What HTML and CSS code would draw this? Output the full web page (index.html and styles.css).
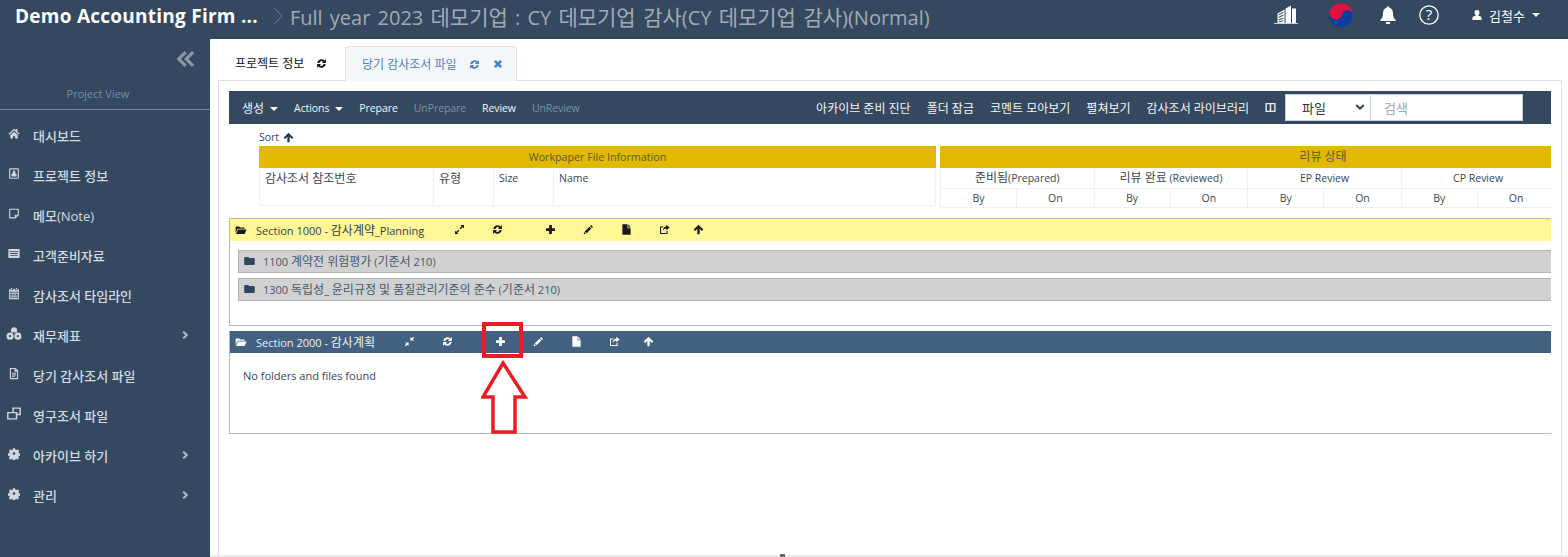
FILE: index.html
```html
<!DOCTYPE html>
<html lang="ko">
<head>
<meta charset="utf-8">
<title>감사조서 파일</title>
<link rel="stylesheet" href="styles.css">
</head>
<body>
<svg class="defs" aria-hidden="true">
  <symbol id="i-refresh" viewBox="0 0 16 16"><path d="M1.800 7.200A6.200 6.200 0 0 1 12.300 3.500L14.400 1.500V7.400H8.500l2-2A3.200 3.200 0 0 0 5 7.200zM14.200 8.800A6.200 6.200 0 0 1 3.700 12.500L1.600 14.500V8.600H7.500l-2 2A3.200 3.200 0 0 0 11 8.800z"/></symbol>
  <symbol id="i-close" viewBox="0 0 16 16"><path d="M4.500 1.500 8 5 11.500 1.500 14.500 4.500 11 8 14.500 11.500 11.500 14.500 8 11 4.500 14.500 1.500 11.500 5 8 1.500 4.500z"/></symbol>
  <symbol id="i-home" viewBox="0 0 16 16"><path d="M8 1.500 .5 8.300l1.100 1.200L8 3.900l6.400 5.600 1.100-1.200-3-2.700V2h-2.300v1.700zM3 10 8 5.600l5 4.400v4.800H9.400v-3.300H6.600v3.300H3z"/></symbol>
  <symbol id="i-contact" viewBox="0 0 16 16"><path fill-rule="evenodd" d="M3 1h10a1.500 1.500 0 0 1 1.500 1.500v11A1.500 1.500 0 0 1 13 15H3a1.500 1.500 0 0 1-1.500-1.500v-11A1.500 1.500 0 0 1 3 1zm0 1.500v11h10v-11zM8 4a2 2 0 0 1 2 2c0 .8-.4 1.400-.8 1.800 1.500.3 2.300 1 2.300 2.200v2h-7v-2c0-1.200.8-1.900 2.300-2.200C6.400 7.400 6 6.800 6 6a2 2 0 0 1 2-2z"/></symbol>
  <symbol id="i-note" viewBox="0 0 16 16"><path fill-rule="evenodd" d="M2.500 1.500h11A1 1 0 0 1 14.500 2.500v7.700L10 14.500H2.500a1 1 0 0 1-1-1v-11a1 1 0 0 1 1-1zM3 3v10h6V9.500h4V3zm7.500 8v1.200l1.300-1.200z"/></symbol>
  <symbol id="i-card" viewBox="0 0 16 16"><path fill-rule="evenodd" d="M.5 2h15v12H.5zM2 4.500v1.300h12V4.500zm1 2.900v1.100h10V7.400zm0 2.600v1.100h10V10z"/></symbol>
  <symbol id="i-calendar" viewBox="0 0 16 16"><path fill-rule="evenodd" d="M4 .5h1.700v2H4zM10.300.5H12v2h-1.700zM1.500 2h1.800v1.500h3.400V2h2.600v1.500h3.400V2h1.800v13.500h-13zM3 5.500v2.300h2V5.500zm3 0v2.300h1.500V5.500zm2.500 0v2.300H10V5.500zM11 5.500v2.300h2V5.500zM3 8.800V11h2V8.800zm3 0V11h1.500V8.800zm2.500 0V11H10V8.800zM11 8.800V11h2V8.800zM3 12v2h2v-2zm3 0v2h1.500v-2zm2.500 0v2H10v-2zM11 12v2h2v-2z"/></symbol>
  <symbol id="i-tree" viewBox="0 0 18 14"><path d="M9 0a3.600 3.600 0 0 1 3.600 3.600c0 .9-.3 1.700-.9 2.400H6.300A3.600 3.600 0 0 1 9 0zM4.600 6a4 4 0 1 1 0 8 4 4 0 0 1 0-8zm8.800 0a4 4 0 1 1 0 8 4 4 0 0 1 0-8zM4.600 8.800a1.200 1.200 0 1 0 0 2.400 1.200 1.200 0 0 0 0-2.400zm8.800 0a1.200 1.200 0 1 0 0 2.400 1.200 1.200 0 0 0 0-2.400z"/></symbol>
  <symbol id="i-doc" viewBox="0 0 16 16"><path fill-rule="evenodd" d="M2.500.5H10l3.500 3.500v11.500h-11zM4 2v12h8V5.500H8.800V2zM5.300 7h5.500v1.200H5.300zm0 2.300h5.500v1.200H5.300zm0 2.300h4v1.200h-4z"/></symbol>
  <symbol id="i-dup" viewBox="0 0 18 16"><path fill-rule="evenodd" d="M7 .5h10.500v9.500H13v5.500H.5V6H7zm1.800 1.800V6H13v2.200h2.700V2.300zM2.300 7.800v5.900h8.900V7.800z"/></symbol>
  <symbol id="i-cog" viewBox="0 0 16 16"><path fill-rule="evenodd" d="M6.500 1h3l.4 2 1.200.5 1.700-1.100 2.100 2.100-1.100 1.700.5 1.200 2 .4v3l-2 .4-.5 1.200 1.100 1.700-2.100 2.100-1.700-1.100-1.200.5-.4 2h-3l-.4-2-1.200-.5-1.700 1.100-2.100-2.100 1.100-1.700-.5-1.200-2-.4v-3l2-.4.5-1.200L1.200 4.500l2.100-2.100L5 3.500l1.200-.5zM8 6.200a1.800 1.800 0 1 0 0 3.600 1.800 1.800 0 0 0 0-3.600z"/></symbol>
  <symbol id="i-chev" viewBox="0 0 8 10"><path d="M2.200 .5 7 5 2.200 9.500.6 8 3.900 5 .6 2z"/></symbol>
  <symbol id="i-double" viewBox="0 0 20 18"><path d="M9.500 1 11.800 3.300 6 9l5.800 5.700-2.300 2.300L1.500 9zM17 1l2.300 2.300L13.500 9l5.800 5.700L17 17 9 9z"/></symbol>
  <symbol id="i-up" viewBox="0 0 16 16"><path d="M8 1 15 8 13 10 9.700 6.800V15H6.300V6.800L3 10 1 8z"/></symbol>
  <symbol id="i-open" viewBox="0 0 16 14"><path d="M.5 2h5l1.200 1.400H13v1.800H3.500L.5 11zM4 6.200h11.800L13 12.500H.8z"/></symbol>
  <symbol id="i-folder" viewBox="0 0 14 12"><path d="M1.500 1h4l1 1.300H12.500A1.200 1.200 0 0 1 13.700 3.500v6.300a1.200 1.200 0 0 1-1.200 1.200h-11A1.200 1.200 0 0 1 .3 9.800v-7.600A1.200 1.200 0 0 1 1.500 1z"/></symbol>
  <symbol id="i-expand" viewBox="0 0 16 16"><path d="M9.500 1.500H14.500V6.500L12.700 4.700 9.700 7.700 8.300 6.300 11.300 3.300zM6.500 14.500H1.500V9.500L3.300 11.300 6.300 8.300 7.700 9.700 4.700 12.700z"/></symbol>
  <symbol id="i-shrink" viewBox="0 0 16 16"><path d="M14.500 6.700H9.300V1.500L11.200 3.400 13.400 1.200 14.800 2.600 12.600 4.800zM1.500 9.300H6.700V14.500L4.800 12.600 2.600 14.800 1.200 13.400 3.400 11.200z"/></symbol>
  <symbol id="i-plus" viewBox="0 0 16 16"><path d="M6 1.500h4V6h4.500v4H10v4.500H6V10H1.500V6H6z"/></symbol>
  <symbol id="i-pencil" viewBox="0 0 16 16"><path d="M11.700 1.500 14.500 4.300 13 5.800 10.200 3zM9.300 3.900 12.100 6.700 5.200 13.600 2.400 10.800zM1.800 11.700 4.300 14.200 1 15z"/></symbol>
  <symbol id="i-file" viewBox="0 0 16 16"><path d="M2 .5H9.500V6H14V15.500H2zM10.500 .5 14 5H10.500z"/></symbol>
  <symbol id="i-share" viewBox="0 0 16 16"><path fill-rule="evenodd" d="M10.500 1 15.500 5 10.500 9V6.800C8 6.800 6.500 7.700 5.500 10 5.500 6.500 7.500 3.700 10.500 3.500zM1.500 3.500H7L5.500 5H3v8h8v-2.500l1.500-1.200V14.500h-11z"/></symbol>
  <symbol id="i-bell" viewBox="0 0 16 16"><path d="M8 .5c.7 0 1.200.5 1.200 1.100 2 .5 3.200 2.200 3.200 4.400 0 3.800.9 5 2.300 6.300v1H1.300v-1c1.400-1.300 2.300-2.500 2.300-6.300 0-2.200 1.200-3.900 3.200-4.400C6.800 1 7.300.5 8 .5zM6 14.300h4a2 2 0 0 1-4 0z"/></symbol>
  <symbol id="i-user" viewBox="0 0 12 14"><path d="M6 1a2.900 2.900 0 0 1 2.900 3.200c0 1.200-.6 2.300-1.300 2.900v.9c2 .4 3.900 1 3.900 2.400V13H.5v-2.600c0-1.400 1.900-2 3.900-2.400v-.9C3.700 6.500 3.100 5.400 3.100 4.200A2.900 2.900 0 0 1 6 1z"/></symbol>
  <symbol id="i-columns" viewBox="0 0 12 12"><path fill-rule="evenodd" d="M.5 1h11v10H.5zM2 2.500v7h3.200v-7zm4.800 0v7H10v-7z"/></symbol>
  <symbol id="i-building" viewBox="0 0 24 20"><path fill-rule="evenodd" d="M0 18h24v.8H0zM3.500 8.500 10.500 4.500V18H3.500zM4.700 9.300v1.200l4.600-2.700V6.700zM4.700 11.800v1.200l4.600-2.300V9.500zM4.700 14.300v1.200l4.600-1.900V12.400zM4.700 16.500v1l4.600-1.200V15.200z"/><path d="M11.500 3.500 17 .5V18H11.500zM18 3.500h4V18H18z"/></symbol>
</svg>

<header class="topbar">
  <div class="brand">Demo Accounting Firm ...</div>
  <svg class="crumb-sep" viewBox="0 0 10 18"><path d="M1 1 9 9 1 17" fill="none" stroke="#6d7e92" stroke-width="1"/></svg>
  <div class="crumb">Full year 2023 <span class="ko">데모기업</span> : CY <span class="ko">데모기업 감사</span>(CY <span class="ko">데모기업 감사</span>)(Normal)</div>
  <div class="top-actions">
    <svg class="ic-building"><use href="#i-building"/></svg>
    <svg class="flag" viewBox="0 0 24 24">
      <circle cx="12" cy="12" r="12" fill="#0b3f9f"/>
      <path d="M.4 9A12 12 0 0 1 23.900 13.500 5.500 5.500 0 0 0 13 12 6.500 6.500 0 0 1 .4 9z" fill="#e0123e"/>
    </svg>
    <svg class="ic-bell"><use href="#i-bell"/></svg>
    <svg class="ic-help" viewBox="0 0 20 20"><circle cx="10" cy="10" r="9.200" fill="none" stroke="#fff" stroke-width="1.300"/><text x="10" y="15" text-anchor="middle" class="help-mark">?</text></svg>
    <div class="user">
      <svg class="ic-user"><use href="#i-user"/></svg>
      <span>김철수</span>
      <i class="caret"></i>
    </div>
  </div>
</header>

<div class="shell">
  <aside class="sidebar">
    <div class="collapse-row"><svg class="ic-double"><use href="#i-double"/></svg></div>
    <div class="view-label">Project View</div>
    <nav class="nav">
      <a class="nav-item"><svg class="nav-ic"><use href="#i-home"/></svg><span>대시보드</span></a>
      <a class="nav-item"><svg class="nav-ic"><use href="#i-contact"/></svg><span>프로젝트 정보</span></a>
      <a class="nav-item"><svg class="nav-ic"><use href="#i-note"/></svg><span>메모(Note)</span></a>
      <a class="nav-item"><svg class="nav-ic"><use href="#i-card"/></svg><span>고객준비자료</span></a>
      <a class="nav-item"><svg class="nav-ic"><use href="#i-calendar"/></svg><span>감사조서 타임라인</span></a>
      <a class="nav-item"><svg class="nav-ic nav-ic-wide"><use href="#i-tree"/></svg><span>재무제표</span><svg class="nav-chev"><use href="#i-chev"/></svg></a>
      <a class="nav-item"><svg class="nav-ic"><use href="#i-doc"/></svg><span>당기 감사조서 파일</span></a>
      <a class="nav-item"><svg class="nav-ic nav-ic-wide"><use href="#i-dup"/></svg><span>영구조서 파일</span></a>
      <a class="nav-item"><svg class="nav-ic"><use href="#i-cog"/></svg><span>아카이브 하기</span><svg class="nav-chev"><use href="#i-chev"/></svg></a>
      <a class="nav-item"><svg class="nav-ic"><use href="#i-cog"/></svg><span>관리</span><svg class="nav-chev"><use href="#i-chev"/></svg></a>
    </nav>
  </aside>

  <main class="main">
    <div class="tabs">
      <div class="tab"><span>프로젝트 정보</span><svg class="tab-ic"><use href="#i-refresh"/></svg></div>
      <div class="tab tab-active"><span>당기 감사조서 파일</span><svg class="tab-ic"><use href="#i-refresh"/></svg><svg class="tab-ic tab-x"><use href="#i-close"/></svg></div>
    </div>
    <div class="panel">
      <div class="toolbar">
        <div class="tb-left">
          <span class="tb-item tb-ko">생성<i class="caret small"></i></span>
          <span class="tb-item">Actions<i class="caret small"></i></span>
          <span class="tb-item">Prepare</span>
          <span class="tb-item muted">UnPrepare</span>
          <span class="tb-item">Review</span>
          <span class="tb-item muted">UnReview</span>
        </div>
        <div class="tb-right">
          <span class="tb-item tb-ko">아카이브 준비 진단</span>
          <span class="tb-item tb-ko">폴더 잠금</span>
          <span class="tb-item tb-ko">코멘트 모아보기</span>
          <span class="tb-item tb-ko">펼쳐보기</span>
          <span class="tb-item tb-ko">감사조서 라이브러리</span>
          <svg class="ic-columns"><use href="#i-columns"/></svg>
          <div class="search">
            <div class="search-type"><span>파일</span><svg class="search-chev" viewBox="0 0 12 8"><path d="M1.500 1 6 5.500 10.500 1" fill="none" stroke="#2c3e50" stroke-width="2.200"/></svg></div>
            <div class="search-input">검색</div>
          </div>
        </div>
      </div>

      <div class="sort">Sort <svg class="ic-sort"><use href="#i-up"/></svg></div>

      <div class="wp-table">
        <div class="info-table">
          <div class="band">Workpaper File Information</div>
          <div class="info-cols">
            <div class="info-col c-ref"><span class="ko">감사조서 참조번호</span></div>
            <div class="info-col c-type"><span class="ko">유형</span></div>
            <div class="info-col c-size">Size</div>
            <div class="info-col c-name">Name</div>
          </div>
        </div>
        <div class="review-table">
          <div class="band band-review"><span class="ko">리뷰 상태</span></div>
          <div class="review-cols">
            <div class="review-group"><div class="rg-title"><span class="ko">준비됨</span>(Prepared)</div><div class="rg-sub"><span>By</span><span>On</span></div></div>
            <div class="review-group"><div class="rg-title"><span class="ko">리뷰 완료</span> (Reviewed)</div><div class="rg-sub"><span>By</span><span>On</span></div></div>
            <div class="review-group"><div class="rg-title">EP Review</div><div class="rg-sub"><span>By</span><span>On</span></div></div>
            <div class="review-group"><div class="rg-title">CP Review</div><div class="rg-sub"><span>By</span><span>On</span></div></div>
          </div>
        </div>
      </div>

      <section class="section sec-one">
        <div class="sec-head head-yellow">
          <svg class="sec-folder"><use href="#i-open"/></svg>
          <span class="sec-title">Section 1000 - <span class="ko">감사계약</span>_Planning</span>
          <div class="sec-tools">
            <svg class="tool"><use href="#i-expand"/></svg>
            <svg class="tool"><use href="#i-refresh"/></svg>
            <svg class="tool far"><use href="#i-plus"/></svg>
            <svg class="tool"><use href="#i-pencil"/></svg>
            <svg class="tool"><use href="#i-file"/></svg>
            <svg class="tool"><use href="#i-share"/></svg>
            <svg class="tool near"><use href="#i-up"/></svg>
          </div>
        </div>
        <div class="sec-body">
          <div class="folder-row"><svg class="row-folder"><use href="#i-folder"/></svg><span>1100 <span class="ko">계약전 위험평가</span> (<span class="ko">기준서</span> 210)</span></div>
          <div class="folder-row"><svg class="row-folder"><use href="#i-folder"/></svg><span>1300 <span class="ko">독립성</span>_ <span class="ko">윤리규정 및 품질관리기준의 준수</span> (<span class="ko">기준서</span> 210)</span></div>
        </div>
      </section>

      <section class="section sec-two">
        <div class="sec-head head-blue">
          <svg class="sec-folder"><use href="#i-open"/></svg>
          <span class="sec-title">Section 2000 - <span class="ko">감사계획</span></span>
          <div class="sec-tools">
            <svg class="tool"><use href="#i-shrink"/></svg>
            <svg class="tool"><use href="#i-refresh"/></svg>
            <svg class="tool far"><use href="#i-plus"/></svg>
            <svg class="tool"><use href="#i-pencil"/></svg>
            <svg class="tool"><use href="#i-file"/></svg>
            <svg class="tool"><use href="#i-share"/></svg>
            <svg class="tool near"><use href="#i-up"/></svg>
          </div>
        </div>
        <div class="empty">No folders and files found</div>
      </section>
    </div>
  </main>
</div>

<svg class="callout" viewBox="0 0 60 116">
  <rect x="3" y="2" width="37" height="32" fill="none" stroke="#ed1c24" stroke-width="4"/>
  <path d="M22 41 44 75H34V110H12V75H2z" fill="none" stroke="#ed1c24" stroke-width="3.500"/>
</svg>
<div class="scroll-track"><i class="scroll-grip"></i></div>
</body>
</html>
```

FILE: styles.css
```css
* { box-sizing: border-box; }
html, body { margin: 0; height: 557px; overflow: hidden; }
body {
  position: relative;
  background: #fff;
  color: #3a4654;
  font-family: "Open Sans", "Noto Sans CJK KR", sans-serif;
  font-size: 11px;
}
.defs { position: absolute; width: 0; height: 0; }
svg { display: block; flex: none; }
.ko { font-size: 12px; }

/* top bar */
.topbar {
  height: 39px;
  background: #34485f;
  display: flex;
  align-items: center;
  padding: 0 0 7px 15px;
}
.brand { color: #fff; font-size: 19px; font-weight: 700; letter-spacing: .25px; white-space: nowrap; }
.crumb-sep { width: 10px; height: 18px; margin-left: 15px; }
.crumb { color: #a3abb5; font-size: 20px; margin-left: 7px; white-space: nowrap; word-spacing: 2px; }
.crumb .ko { font-size: 21px; }
.top-actions { margin-left: auto; display: flex; align-items: center; height: 100%; padding-bottom: 2px; }
.ic-building { width: 24px; height: 20px; fill: #fff; margin-right: 31px; }
.flag { width: 24px; height: 24px; margin-right: 26px; }
.ic-bell { width: 18px; height: 18px; fill: #fff; margin-right: 22px; }
.ic-help { width: 20px; height: 20px; margin-right: 33px; }
.help-mark { fill: #fff; font-size: 15px; font-family: "Open Sans", sans-serif; }
.user { display: flex; align-items: center; color: #fff; font-size: 13px; margin-right: 28px; }
.ic-user { width: 10px; height: 12px; fill: #fff; margin-right: 7px; }
.caret {
  display: inline-block;
  width: 0;
  height: 0;
  margin-left: 7px;
  border-left: 4px solid transparent;
  border-right: 4px solid transparent;
  border-top: 4px solid #fff;
}
.caret.small { margin-left: 6px; vertical-align: middle; }

/* shell */
.shell { display: flex; height: 518px; }
.sidebar { width: 210px; flex: none; background: #34485f; }
.collapse-row { display: flex; justify-content: flex-end; padding: 11px 15px 0 0; height: 46px; }
.ic-double { width: 20px; height: 18px; fill: #8b97a6; }
.view-label {
  height: 25px;
  border-bottom: 1px solid #6f87a3;
  text-align: center;
  color: #6b92ba;
  font-size: 11px;
  line-height: 18px;
  padding-right: 14px;
}
.nav { padding-top: 5px; }
.nav-item {
  display: flex;
  align-items: center;
  height: 40px;
  color: #d5dbe2;
  font-size: 13px;
  font-weight: 500;
  padding-left: 8px;
}
.nav-ic { width: 12px; height: 13px; fill: #cfd6de; margin-right: 13px; margin-top: -4px; }
.nav-ic-wide { width: 16px; margin-left: -2px; margin-right: 11px; }
.nav-chev { width: 7px; height: 10px; fill: #b7c0ca; margin-left: auto; margin-right: 21px; }

/* main */
.main { flex: 1; min-width: 0; display: flex; flex-direction: column; padding: 7px 6px 0 8px; border-bottom: 2px solid #ececec; }
.tabs { display: flex; height: 34px; padding-left: 1px; }
.tab {
  display: flex;
  align-items: center;
  width: 126px;
  padding-left: 16px;
  color: #111;
  font-size: 12px;
}
.tab-active {
  width: 172px;
  padding-left: 16px;
  margin-bottom: -1px;
  height: 35px;
  position: relative;
  color: #4b7fc7;
  background: #f4f7fa;
  border: 1px solid #d8dfe7;
  border-bottom: 0;
  border-radius: 4px 4px 0 0;
}
.tab-ic { width: 11px; height: 11px; fill: #111; margin-left: 12px; }
.tab-active .tab-ic { fill: #4b7fc7; }
.tab-x { width: 10px; height: 10px; margin-left: 13px; }
.panel {
  flex: 1;
  border: 1px solid #d8dfe7;
  border-bottom: 0;
  padding: 10px 10px 0 10px;
}

/* toolbar */
.toolbar {
  height: 33px;
  background: #34485f;
  display: flex;
  align-items: center;
  justify-content: space-between;
  padding-left: 13px;
}
.tb-left, .tb-right { display: flex; align-items: center; }
.tb-left { gap: 16px; }
.tb-right { gap: 16px; padding-right: 28px; }
.tb-item { color: #f6f7f9; font-size: 10.500px; white-space: nowrap; letter-spacing: -.08px; font-weight: 500; }
.tb-ko { font-size: 12px; letter-spacing: 0; font-weight: 400; }
.tb-item.muted { color: #8090a2; }
.ic-columns { width: 11px; height: 11px; fill: #e8ecf0; }
.search { display: flex; height: 27px; margin-left: -7px; }
.search-type {
  width: 86px;
  background: #fff;
  border: 1px solid #c7d2de;
  display: flex;
  align-items: center;
  justify-content: space-between;
  padding: 0 5px 0 16px;
  color: #333;
  font-size: 13px;
}
.search-chev { width: 10px; height: 7px; }
.search-input {
  width: 152px;
  background: #fff;
  border: 1px solid #c7d2de;
  border-left: 0;
  display: flex;
  align-items: center;
  padding-left: 13px;
  color: #a2a8ae;
  font-size: 13px;
}

/* sort + table */
.sort { display: flex; align-items: center; gap: 4px; height: 22px; margin-left: 30px; font-size: 10.500px; padding-top: 4px; }
.ic-sort { width: 11px; height: 11px; fill: #26384c; }
.wp-table { display: flex; gap: 4px; margin-left: 30px; }
.band {
  height: 22px;
  background: #e0b900;
  color: #5d5a2a;
  text-align: center;
  font-size: 10.700px;
  line-height: 22px;
}
.band-review { padding-left: 155px; }
.info-table { width: 677px; }
.info-cols { display: flex; height: 38px; border: 1px solid #eef0f2; border-top: 0; }
.info-col { padding: 3px 5px; border-right: 1px solid #eef0f2; font-size: 10.500px; line-height: 15px; }
.c-ref { width: 174px; }
.c-type { width: 60px; }
.c-size { width: 60px; }
.c-name { flex: 1; border-right: 0; }
.review-table { flex: 1; min-width: 0; overflow: hidden; }
.review-cols { display: flex; width: 616px; }
.review-group { flex: none; width: 153.600px; border-left: 1px solid #eef0f2; border-bottom: 1px solid #eef0f2; text-align: center; font-size: 10.500px; }
.rg-title { height: 21px; line-height: 20px; border-bottom: 1px solid #eef0f2; }
.rg-sub { display: flex; height: 18px; line-height: 18px; }
.rg-sub span { flex: none; width: 75px; }
.rg-sub span + span { flex: 1; border-left: 1px solid #eef0f2; }

/* sections */
.section { border: 1px solid #b9b9bb; border-right: 0; }
.sec-one { margin-top: 10px; height: 108px; }
.sec-two { margin-top: 5px; height: 103px; border-top: 0; }
.sec-head {
  height: 22px;
  display: flex;
  align-items: center;
  padding: 0 0 1px 5px;
  font-size: 11px;
}
.head-yellow { background: #fff695; color: #2c3e50; fill: #1a1a1a; }
.head-blue { background: #446080; color: #eef2f6; fill: #fff; }
.sec-folder { width: 12px; height: 10px; margin-right: 9px; }
.sec-title { white-space: nowrap; }
.sec-tools { display: flex; align-items: center; margin-left: 29.500px; }
.tool { width: 11px; height: 11px; margin-left: 27px; }
.tool:first-child { margin-left: 0; }
.tool.far { margin-left: 42px; }
.tool.near { margin-left: 23px; }
.sec-body { padding: 9px 0 0 8px; display: flex; flex-direction: column; gap: 5px; }
.folder-row {
  height: 23px;
  background: #d1d1d1;
  border-top: 1px solid #b5b5b5;
  border-bottom: 1px solid #b5b5b5;
  border-left: 1px solid #b5b5b5;
  display: flex;
  align-items: center;
  padding: 0 0 1px 5px;
  font-size: 11px;
  color: #46566a;
}
.row-folder { width: 11px; height: 10px; fill: #2f4560; margin-right: 8px; }
.empty { padding: 15px 13px; font-size: 11px; color: #3a4654; }

/* annotation over the page */
.callout { position: absolute; left: 481px; top: 322px; width: 60px; height: 116px; }
.scroll-track { position: absolute; left: 210px; right: 0; bottom: 0; height: 2px; }
.scroll-grip { position: absolute; left: 570px; top: -1px; width: 5px; height: 3px; background: #666; }
```
